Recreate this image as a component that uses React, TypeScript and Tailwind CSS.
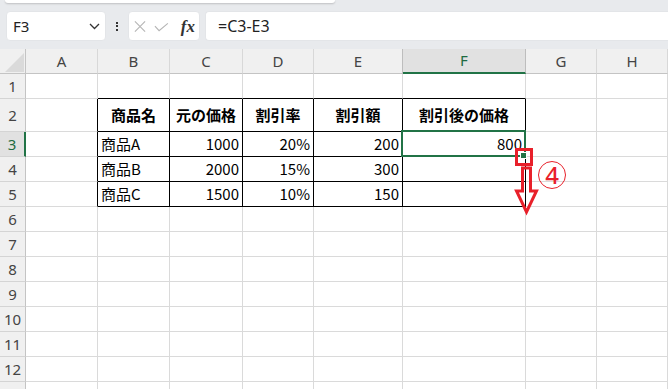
import { Fragment } from 'react';

const GRID = 'border-r-[#dadada]';
const GRID_B = 'border-b-[#dadada]';
const GREEN = '#217346';

const COL_LETTERS = ['A', 'B', 'C', 'D', 'E', 'F', 'G', 'H'];
const COL_W = ['w-[72px]', 'w-[72px]', 'w-[73px]', 'w-[71px]', 'w-[89px]', 'w-[123px]', 'w-[71px]', 'flex-1'];

// table body B2:F5
const TABLE: Record<number, string[]> = {
  2: ['商品名', '元の価格', '割引率', '割引額', '割引後の価格'],
  3: ['商品A', '1000', '20%', '200', '800'],
  4: ['商品B', '2000', '15%', '300', ''],
  5: ['商品C', '1500', '10%', '150', ''],
};

const ROWS = Array.from({ length: 13 }, (_, i) => i + 1);

function NameBox() {
  return (
    <div className="ml-[6px] w-[100px] h-[30px] bg-white rounded-[4px] border border-[#e3e5e8] flex items-center pl-[6px] pr-[5px]">
      <span className="flex-1 text-[15px] text-[#222] font-['Noto_Sans',sans-serif]">F3</span>
      <svg width="11" height="7" viewBox="0 0 11 7" className="mt-[1px]">
        <polyline points="1,1 5.5,5.5 10,1" fill="none" stroke="#333" strokeWidth="1.3" />
      </svg>
    </div>
  );
}

function FormulaButtons() {
  return (
    <div className="w-[72px] h-[30px] bg-white rounded-[4px] border border-[#e3e5e8] flex items-center pl-[5px] pr-[4px] gap-[8px]">
      <svg width="13" height="13" viewBox="0 0 13 13">
        <path d="M1 1 L12 12 M12 1 L1 12" stroke="#b5b5b5" strokeWidth="1.2" />
      </svg>
      <svg width="16" height="10" viewBox="0 0 16 10" className="mt-[2px]">
        <polyline points="1,4 5.5,9 15,1" fill="none" stroke="#b5b5b5" strokeWidth="1.2" />
      </svg>
      <span className="ml-[4px] text-[17px] leading-none italic font-bold text-[#333] font-['Liberation_Serif',serif]">fx</span>
    </div>
  );
}

function Toolbar() {
  return (
    <div className="relative h-[49px] bg-[#e8eaed]">
      <div className="absolute left-[5px] top-0 w-[330px] h-[3px] bg-white rounded-b-[3px] shadow-[0_1px_2px_rgba(0,0,0,0.18)]" />
      <div className="flex items-center pt-[11px]">
        <NameBox />
        <div className="w-[22px] flex flex-col items-center gap-[1.5px]">
          <div className="w-[2px] h-[2px] bg-[#333]" />
          <div className="w-[2px] h-[2px] bg-[#333]" />
          <div className="w-[2px] h-[2px] bg-[#333]" />
        </div>
        <FormulaButtons />
        <div className="ml-[5px] flex-1 h-[30px] bg-white rounded-l-[4px] border border-r-0 border-[#e3e5e8] flex items-center pl-[12px]">
          <span className="text-[16px] text-[#222] font-['Noto_Sans',sans-serif]">=C3-E3</span>
        </div>
      </div>
    </div>
  );
}

function ColumnHeaders() {
  return (
    <div className="flex h-[25px] bg-[#f0f0f0] font-['Noto_Sans',sans-serif] text-[15px] text-[#444]">
      <div className="relative w-[26px] shrink-0 border-r border-b border-r-[#c4c4c4] border-b-[#c4c4c4]">
        <svg width="19" height="19" viewBox="0 0 19 19" className="absolute right-[1px] bottom-[1px]">
          <polygon points="0,19 19,0 19,19" fill="#dadada" />
        </svg>
      </div>
      {COL_LETTERS.map((l, c) => {
        const sel = l === 'F';
        return (
          <div
            key={l}
            className={`${COL_W[c]} shrink-0 flex items-center justify-center border-r ${
              sel
                ? 'bg-[#e1e1e1] border-b-2 border-b-[#217346] text-[#1e6b41] border-r-[#bdbdbd]'
                : l === 'E'
                  ? 'border-b border-b-[#c4c4c4] border-r-[#bdbdbd]'
                  : 'border-b border-b-[#c4c4c4] border-r-[#d8d8d8]'
            }`}
          >
            {l}
          </div>
        );
      })}
    </div>
  );
}

function Cell({ r, c }: { r: number; c: number }) {
  const rightBlack = r >= 2 && r <= 5 && c <= 5;
  const bottomBlack = r >= 1 && r <= 5 && c >= 1 && c <= 5;
  const value = TABLE[r] && c >= 1 && c <= 5 ? TABLE[r][c - 1] : '';
  const isHead = r === 2;
  const align = isHead ? 'justify-center font-bold' : c === 1 ? 'justify-start' : 'justify-end';
  return (
    <div
      className={`${COL_W[c]} shrink-0 flex items-center px-[3px] border-r border-b ${
        rightBlack ? 'border-r-black' : GRID
      } ${bottomBlack ? 'border-b-black' : GRID_B} ${align}`}
    >
      {value}
    </div>
  );
}

function Sheet() {
  return (
    <div className="font-['Noto_Sans_CJK_JP',sans-serif] text-[15px] text-black">
      {ROWS.map((r) => (
        <div key={r} className={`flex ${r === 2 ? 'h-[33px]' : 'h-[25px]'}`}>
          <div
            className={`w-[26px] shrink-0 flex items-center justify-center border-b border-b-[#d4d4d4] font-['Noto_Sans',sans-serif] ${
              r === 3
                ? 'bg-[#e1e1e1] border-r-2 border-r-[#217346] text-[#1e6b41]'
                : 'bg-[#f0f0f0] border-r border-r-[#c4c4c4] text-[#444]'
            }`}
          >
            {r}
          </div>
          {COL_LETTERS.map((_, c) => (
            <Fragment key={c}>
              <Cell r={r} c={c} />
            </Fragment>
          ))}
        </div>
      ))}
    </div>
  );
}

export default function App() {
  return (
    <div className="relative w-[668px] h-[389px] overflow-hidden bg-white">
      <Toolbar />
      <ColumnHeaders />
      <Sheet />

      {/* active cell F3 + fill handle */}
      <div className="absolute left-[401px] top-[130px] w-[125px] h-[27px] border-2 border-[#217346] pointer-events-none" />
      <div className="absolute left-[520px] top-[152px] w-[7px] h-[7px] border border-white pointer-events-none" style={{ backgroundColor: GREEN }} />

      {/* red annotation */}
      <div className="absolute left-[515px] top-[148px] w-[18px] h-[18px] border-[3px] border-[#e8202a]" />
      <svg className="absolute left-0 top-0 pointer-events-none" width="668" height="389">
        <polygon
          points="522.5,168 530.5,168 530.5,191 536.5,191 526.5,212 516.5,191 522.5,191"
          fill="none"
          stroke="#e8202a"
          strokeWidth="3"
          strokeLinejoin="miter"
        />
      </svg>
      <div className="absolute left-[538px] top-[161px] w-[28px] h-[28px] rounded-full border-[1.5px] border-[#e8202a] flex items-center justify-center">
        <span className="text-[24px] leading-none font-medium text-[#e8202a] font-['Noto_Sans',sans-serif]">4</span>
      </div>
    </div>
  );
}
